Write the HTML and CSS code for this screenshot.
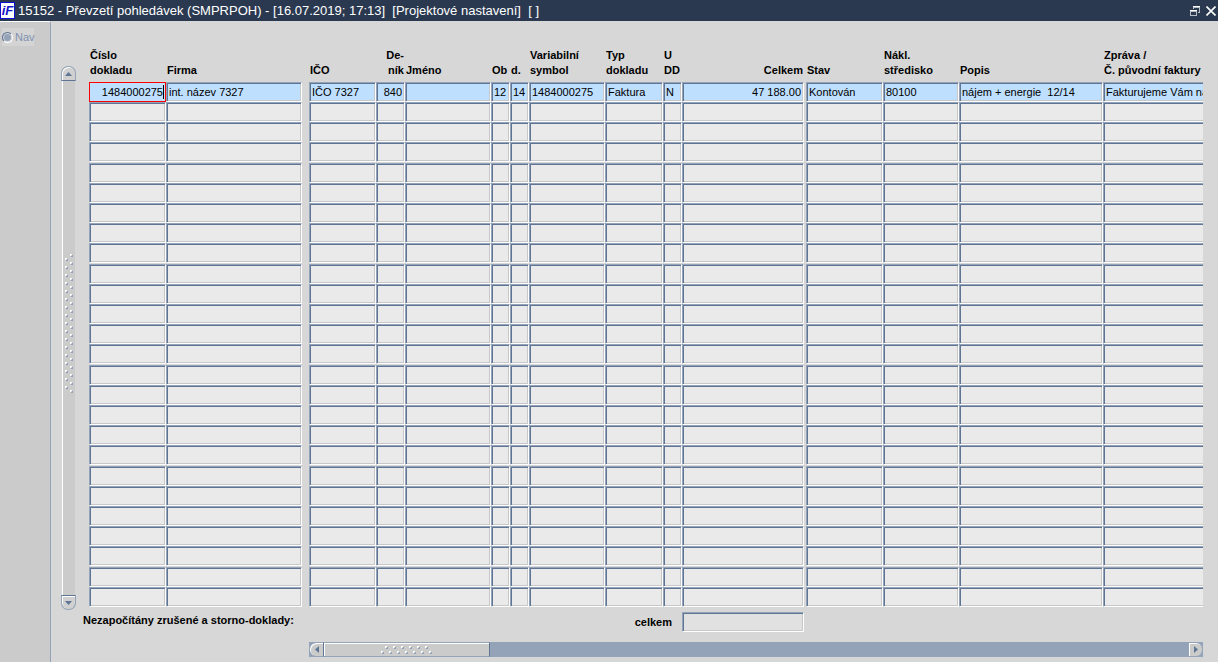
FILE: index.html
```html
<!DOCTYPE html>
<html lang="cs">
<head>
<meta charset="utf-8">
<meta name="viewport" content="width=device-width, initial-scale=1">
<title>Převzetí pohledávek</title>
<link rel="stylesheet" href="styles.css">
</head>
<body>
<header class="titlebar">
  <span class="logo">iF</span>
  <h1 class="title">15152 - Převzetí pohledávek (SMPRPOH) - [16.07.2019; 17:13]  [Projektové nastavení]  [ ]</h1>
  <button class="winbtn" type="button" aria-label="Obnovit">
    <svg width="10" height="10" viewBox="0 0 10 10" shape-rendering="crispEdges"><path d="M3 0h7v7H8V6h1V2H4v1H3z" fill="#b9bec6"/><path d="M3 0h7v1H3z" fill="#fff"/><path fill-rule="evenodd" d="M0 4h7v6H0zM1 6v3h5V6z" fill="#b9bec6"/><path d="M0 4h7v1H0z" fill="#fff"/></svg>
  </button>
  <button class="winbtn" type="button" aria-label="Zavřít">
    <svg width="10" height="10" viewBox="0 0 10 10" fill="none"><path d="M.5.5l9 9M9.500.5l-9 9" stroke="#fff" stroke-width="1.6"/></svg>
  </button>
</header>
<div class="workspace">
  <nav class="side">
    <label class="nav-option"><input class="nav-radio" type="radio" name="nav" disabled>Nav</label>
  </nav>
  <main class="main">
    <div class="records">
      <div class="vscroll">
        <button class="vbtn vbtn-up" type="button" aria-label="Nahoru"><svg width="7" height="4" viewBox="0 0 7 4"><path d="M3.5 0L7 4H0z" fill="#5f7595"/></svg></button>
        <div class="vtrack">
          <svg width="8" height="139" viewBox="0 0 8 139" shape-rendering="crispEdges">
            <defs>
              <pattern id="vgrip" width="8" height="8" patternUnits="userSpaceOnUse">
                <path d="M5 0h2v1h-1v1h-1zM0 4h2v1h-1v1h-1z" fill="#fff"/><path d="M7 1h1v2h-2v-1h1zM2 5h1v2h-2v-1h1z" fill="#94a3b7"/>
              </pattern>
            </defs>
            <rect width="8" height="139" fill="url(#vgrip)"/>
          </svg>
        </div>
        <button class="vbtn vbtn-down" type="button" aria-label="Dolů"><svg width="7" height="4" viewBox="0 0 7 4"><path d="M0 0h7L3.500 4z" fill="#5f7595"/></svg></button>
      </div>
      <div class="table-view">
        <table class="grid">
          <colgroup>
            <col class="w77"><col class="w143"><col class="w67"><col class="w29"><col class="w86"><col class="w19"><col class="w19"><col class="w76"><col class="w58"><col class="w19"><col class="w124"><col class="w77"><col class="w76"><col class="w144"><col>
          </colgroup>
          <thead>
            <tr>
              <th>Číslo<br>dokladu</th><th>Firma</th><th>IČO</th><th class="num">De-<br>ník</th><th>Jméno</th><th>Ob</th><th>d.</th><th>Variabilní<br>symbol</th><th>Typ<br>dokladu</th><th>U<br>DD</th><th class="num gap-narrow">Celkem</th><th>Stav</th><th>Nákl.<br>středisko</th><th>Popis</th><th>Zpráva /<br>Č. původní faktury</th>
            </tr>
          </thead>
          <tbody id="rows"></tbody>
        </table>
      </div>
    </div>
    <div class="summary">
      <p class="note">Nezapočítány zrušené a storno-doklady:</p>
      <label class="sum-label" for="sum">celkem</label>
      <input class="field sum-field" id="sum" type="text" readonly>
    </div>
    <div class="hscroll">
      <button class="hbtn hbtn-left" type="button" aria-label="Vlevo"><svg width="4" height="7" viewBox="0 0 4 7"><path d="M4 0v7L0 3.500z" fill="#5f7595"/></svg></button>
      <div class="hthumb">
        <svg width="52" height="8" viewBox="0 0 52 8" shape-rendering="crispEdges">
          <defs>
            <pattern id="hgrip" width="8" height="8" patternUnits="userSpaceOnUse">
              <path d="M4 0h2v1h-1v1h-1zM0 5h2v1h-1v1h-1z" fill="#fff"/><path d="M6 1h1v2h-2v-1h1zM2 6h1v2h-2v-1h1z" fill="#94a3b7"/>
            </pattern>
          </defs>
          <rect width="52" height="8" fill="url(#hgrip)"/>
        </svg>
      </div>
      <button class="hbtn hbtn-right" type="button" aria-label="Vpravo"><svg width="4" height="7" viewBox="0 0 4 7"><path d="M0 0v7L4 3.500z" fill="#5f7595"/></svg></button>
    </div>
  </main>
</div>
<script src="app.js"></script>
</body>
</html>
```
FILE: styles.css
```css
* { box-sizing: border-box; }

body {
  margin: 0;
  min-height: 100vh;
  display: flex;
  flex-direction: column;
  background: #d7d7d7;
  color: #000;
  font: 11px/15px "Liberation Sans", Arial, sans-serif;
}

button {
  padding: 0;
  border: 0;
  background: none;
  display: flex;
  align-items: center;
  justify-content: center;
}

.titlebar {
  height: 21px;
  display: flex;
  align-items: center;
  gap: 3px;
  padding-right: 1px;
  background: #2a3950;
  color: #fff;
}

.logo {
  width: 15px;
  height: 17px;
  border: 1px solid #1010d0;
  background: #fff;
  color: #1414c8;
  font-size: 13px;
  font-weight: bold;
  font-style: italic;
  line-height: 15px;
  text-align: center;
}

.title {
  flex: 1;
  margin: 0;
  font-size: 13px;
  font-weight: normal;
  white-space: pre;
}

.winbtn { width: 13px; height: 17px; }

.workspace { flex: 1; display: flex; }

.side {
  width: 51px;
  padding: 6px 2px;
  background: #cbcbcb;
  border-top: 1px solid #fff;
  border-right: 1px solid #94a3b7;
  border-top-right-radius: 3px;
}

.nav-option {
  width: 32px;
  height: 18px;
  display: flex;
  align-items: center;
  gap: 2px;
  background: #d4d4d4;
  color: #7f92b0;
}

.nav-radio {
  appearance: none;
  flex: none;
  width: 11px;
  height: 11px;
  margin: 0;
  border: 1px solid;
  border-color: #5f7595 #fff #fff #5f7595;
  border-radius: 50%;
  background: #94a3b7;
  box-shadow: inset 0 0 0 1px #d7d7d7;
}

.main { flex: 1; min-width: 0; padding: 26px 15px 5px 10px; }

.records { display: flex; gap: 13px; }

.vscroll {
  width: 15px;
  margin: 19px 0 -3px;
  display: flex;
  flex-direction: column;
}

.vbtn {
  height: 15px;
  border: 1px solid #94a3b7;
  background: #d0d0d0;
  box-shadow: inset 1px 1px #fff;
}

.vbtn-up { border-radius: 7px 7px 0 0; border-bottom-color: #5f7595; }
.vbtn-down { border-radius: 0 0 7px 7px; border-top-color: #5f7595; }

.vtrack {
  flex: 1;
  margin: 0 1px;
  padding-bottom: 30px;
  border-left: 1px solid #fff;
  background: #cbcbcb;
  display: flex;
  align-items: center;
  justify-content: center;
}

.table-view { flex: 1; min-width: 0; overflow: hidden; }

.grid { width: 100%; table-layout: fixed; border-collapse: collapse; }
.w19 { width: 19px; }
.w29 { width: 29px; }
.w58 { width: 58px; }
.w67 { width: 67px; }
.w76 { width: 76px; }
.w77 { width: 77px; }
.w86 { width: 86px; }
.w124 { width: 124px; }
.w143 { width: 143px; }
.w144 { width: 144px; }

.grid th {
  height: 35px;
  padding: 0 0 4px 1px;
  text-align: left;
  vertical-align: bottom;
  white-space: nowrap;
}

.grid th.num { padding-right: 1px; text-align: right; }
.grid th.gap-narrow { padding-right: 3px; }

.grid tbody tr { height: 20px; }
.grid tbody tr:nth-child(5n+4) { height: 21px; }

.grid td { padding: 0; position: relative; vertical-align: top; }
.grid td.gap-wide { padding-right: 7px; }
.grid td.gap-narrow { padding-right: 2px; }

.field {
  display: block;
  width: 100%;
  height: 20px;
  margin: 0;
  padding: 0 2px;
  border: 1px solid;
  border-color: #94a3b7 #fff #fff #94a3b7;
  border-radius: 1px;
  background: #eaeaea;
  box-shadow: inset 1px 1px #5f7595, inset -1px -1px #c8c8c8;
  color: #000;
  font: inherit;
  outline: none;
}

.grid td:last-child .field { border-right: 0; border-radius: 0; padding-right: 0; box-shadow: inset 1px 1px #5f7595, inset 0 -1px #c8c8c8; }
.current .field { background: #bfdfff; }
.num .field { text-align: right; }
.current .field.active { border: 1px solid #f00; border-radius: 0; box-shadow: none; }

.caret {
  position: absolute;
  top: 3px;
  right: 2px;
  width: 1px;
  height: 14px;
  background: #000;
}

.summary {
  display: grid;
  grid-template-columns: 220px 359px 122px;
  column-gap: 10px;
  margin: 5px 0 0 22px;
}

.note, .sum-label { margin: 0; font-weight: bold; white-space: nowrap; }
.note { padding-top: 1px; }
.sum-label { padding-top: 3px; text-align: right; }
.sum-field { background: #e1e1e1; }

.hscroll {
  height: 15px;
  margin: 10px 0 0 248px;
  display: flex;
  background: #94a3b7;
}

.hbtn {
  width: 15px;
  border: 1px solid #94a3b7;
  background: #cbcbcb;
  box-shadow: inset 1px 1px #fff;
}

.hbtn-left { border-radius: 7px 0 0 7px; border-right-color: #5f7595; }
.hbtn-right { border-radius: 0 7px 7px 0; margin-left: auto; }

.hthumb {
  width: 166px;
  border: 1px solid #94a3b7;
  border-left: 0;
  border-right-color: #5f7595;
  background: #cbcbcb;
  box-shadow: inset 1px 1px #fff;
  display: flex;
  align-items: center;
  justify-content: center;
}
```
FILE: app.js
```js
const columns = [
  { label: "Číslo dokladu", value: "1484000275", cls: "num" },
  { label: "Firma", value: "int. název 7327", cls: "gap-wide" },
  { label: "IČO", value: "IČO 7327" },
  { label: "Deník", value: "840", cls: "num" },
  { label: "Jméno", value: "" },
  { label: "Období", value: "12" },
  { label: "Rok", value: "14" },
  { label: "Variabilní symbol", value: "1484000275" },
  { label: "Typ dokladu", value: "Faktura" },
  { label: "U DD", value: "N" },
  { label: "Celkem", value: "47 188.00", cls: "num gap-narrow" },
  { label: "Stav", value: "Kontován" },
  { label: "Nákl. středisko", value: "80100" },
  { label: "Popis", value: "nájem + energie  12/14" },
  { label: "Zpráva / Č. původní faktury", value: "Fakturujeme Vám nájem" }
];
const ROW_COUNT = 26;
const body = document.getElementById("rows");

for (let r = 0; r < ROW_COUNT; r++) {
  const row = body.insertRow();
  if (r === 0) row.className = "current";
  columns.forEach((column, c) => {
    const cell = row.insertCell();
    if (column.cls) cell.className = column.cls;
    const input = document.createElement("input");
    input.type = "text";
    input.className = "field";
    input.setAttribute("aria-label", column.label);
    if (r === 0) input.value = column.value;
    cell.append(input);
    if (r === 0 && c === 0) {
      input.classList.add("active");
      const caret = document.createElement("span");
      caret.className = "caret";
      cell.append(caret);
    }
  });
}
```
